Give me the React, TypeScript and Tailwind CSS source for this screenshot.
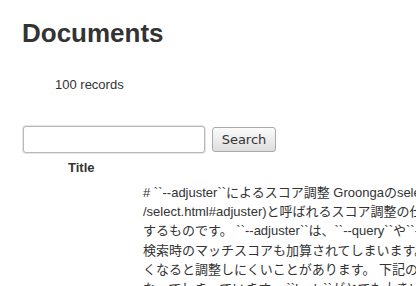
import React from "react";

const lines = [
  "# ``--adjuster``によるスコア調整 Groongaのselectコマンドには[``--adjuster``](http://groonga.org/ja/docs/reference/commands",
  "/select.html#adjuster)と呼ばれるスコア調整の仕組みがあります。これは検索結果のスコアを調整",
  "するものです。 ``--adjuster``は、``--query``や``--filter``で指定した条件での",
  "検索時のマッチスコアも加算されてしまいます。そのため、マッチスコアが大き",
  "くなると調整しにくいことがあります。 下記の例では、マッチスコアが大きく",
  "なってしまっています。 ``body``がとても大きいため、スコアが",
];

export default function App() {
  return (
    <div className="h-screen overflow-hidden bg-white px-[22px] pt-[18px] font-['Liberation_Sans','Noto_Sans_CJK_JP',sans-serif] text-[#333]">
      <h1 className="text-[26px] font-bold leading-[30px]">Documents</h1>

      <p className="mt-[29px] pl-[33px] text-[13px] leading-[15px]">100 records</p>

      <form className="mt-[34px] flex items-center" onSubmit={(e) => e.preventDefault()}>
        <input
          type="text"
          className="ml-[1px] h-[27px] w-[182px] rounded-[3px] border border-[#b8b8b8] bg-white shadow-[0_0_0_1px_#e6e6e6] outline-none"
        />
        <button
          type="submit"
          className="ml-[7px] h-[25px] w-[64px] rounded-[3px] border border-[#a9a9a9] bg-gradient-to-b from-[#fbfbfb] to-[#dedede] font-['DejaVu_Sans',sans-serif] text-[13px] text-[#333]"
        >
          Search
        </button>
      </form>

      <div className="mt-[7px] pl-[46px] text-[13px] font-bold leading-[15px]">Title</div>

      <div className="mt-[8px] pl-[121px] text-[13px] leading-[19.2px]">
        {lines.map((l) => (
          <div key={l} className="whitespace-nowrap">
            {l}
          </div>
        ))}
      </div>
    </div>
  );
}
